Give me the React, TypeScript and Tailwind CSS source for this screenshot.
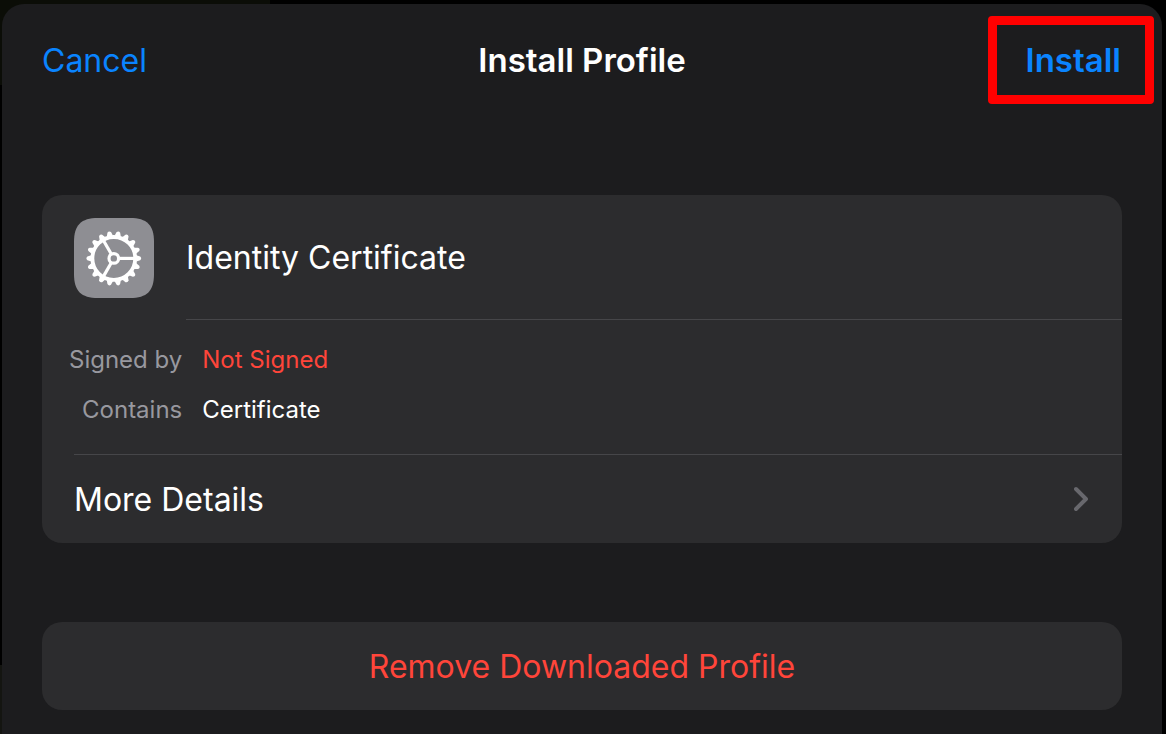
import type { ReactNode } from 'react'

const GEAR_TEETH = Array.from({ length: 18 }, (_, i) => i * 20)
const GEAR_SPOKES = [0, 120, 240]

const DETAILS = [
  { label: 'Signed by', value: 'Not Signed', valueClass: 'text-[#ff453a]' },
  { label: 'Contains', value: 'Certificate', valueClass: 'text-white' },
]

function GearIcon() {
  return (
    <svg viewBox="-40 -40 80 80" className="h-20 w-20 shrink-0" aria-hidden="true">
      <path
        d="M-40 -16C-40 -33 -33 -40 -16 -40H16C33 -40 40 -33 40 -16V16C40 33 33 40 16 40H-16C-33 40 -40 33 -40 16Z"
        fill="#8e8e93"
      />
      <g transform="translate(-0.2 0.4)">
        <g stroke="#fff" fill="none">
          <circle r="21.4" strokeWidth="3.8" />
          <circle r="4.8" strokeWidth="3.2" />
          {GEAR_SPOKES.map((angle) => (
            <path key={angle} d="M5 0H21" strokeWidth="3.2" transform={`rotate(${angle})`} />
          ))}
        </g>
        {GEAR_TEETH.map((angle) => (
          <path
            key={angle}
            d="M22.5 -3.2L26.4 -1.8Q28.4 0 26.4 1.8L22.5 3.2Z"
            fill="#fff"
            transform={`rotate(${angle})`}
          />
        ))}
      </g>
    </svg>
  )
}

function ChevronIcon() {
  return (
    <svg viewBox="0 0 16 26" className="h-[26px] w-4" fill="none" aria-hidden="true">
      <path
        d="M2 3L12 13L2 23"
        stroke="#68686d"
        strokeWidth="3.9"
        strokeLinecap="round"
        strokeLinejoin="round"
      />
    </svg>
  )
}

function Card({ children }: { children: ReactNode }) {
  return <section className="overflow-hidden rounded-[20px] bg-[#2c2c2e]">{children}</section>
}

export default function App() {
  return (
    <div className="flex min-h-screen flex-col bg-black bg-[linear-gradient(#0b0d07,#0b0d07),linear-gradient(#141511,#141511)] bg-[length:270px_85px,2px_69px] bg-[position:left_top,left_bottom] bg-no-repeat pt-1 pr-1 pl-0.5 font-['Inter',sans-serif] text-[32px] leading-[41px] text-white">
      <main className="flex-1 rounded-t-[22px] bg-[#1c1c1e] pb-6">
        <header className="grid h-28 grid-cols-[1fr_auto_1fr] items-center px-2">
          <button type="button" className="justify-self-start pl-8 text-[#0a84ff]">
            Cancel
          </button>
          <h1 className="text-[33px] font-semibold">Install Profile</h1>
          <button
            type="button"
            className="h-[88px] justify-self-end rounded border-[9px] border-[#ff0000] pr-6 pl-[29px] text-[33px] font-semibold text-[#0a84ff]"
          >
            Install
          </button>
        </header>

        <div className="flex flex-col gap-[79px] px-10 pt-[79px]">
          <Card>
            <div className="flex items-center gap-8 pl-8">
              <GearIcon />
              <h2 className="flex h-[125px] flex-1 items-center border-b border-[#464649]">
                Identity Certificate
              </h2>
            </div>
            <div className="pl-[27px]">
              <table className="mt-[15px] mb-[19px] text-2xl">
                <tbody>
                  {DETAILS.map((row) => (
                    <tr key={row.label} className="h-[50px]">
                      <th scope="row" className="pr-5 text-right font-normal text-[#98989f]">
                        {row.label}
                      </th>
                      <td className={row.valueClass}>{row.value}</td>
                    </tr>
                  ))}
                </tbody>
              </table>
            </div>
            <div className="pl-8">
              <button
                type="button"
                className="flex h-[89px] w-full items-center justify-between border-t border-[#464649] pr-8"
              >
                More Details
                <ChevronIcon />
              </button>
            </div>
          </Card>

          <Card>
            <button type="button" className="h-[88px] w-full text-[#ff453a]">
              Remove Downloaded Profile
            </button>
          </Card>
        </div>
      </main>
    </div>
  )
}
